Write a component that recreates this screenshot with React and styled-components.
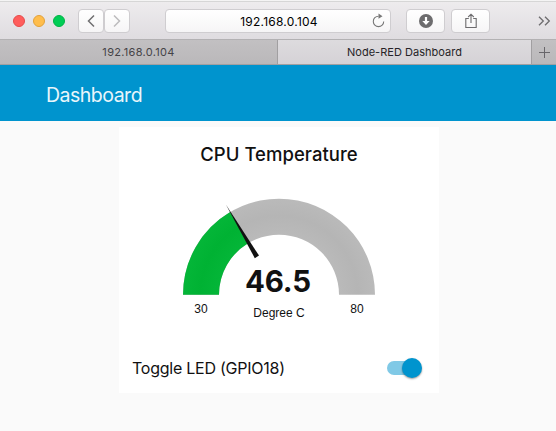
import React from 'react';
import styled, { createGlobalStyle } from 'styled-components';

const GlobalStyle = createGlobalStyle`
  * { box-sizing: border-box; }
  body { margin: 0; background: #fafafa; font-family: Inter, sans-serif; }
`;

const Window = styled.div`
  width: 556px;
  height: 431px;
  overflow: hidden;
  background: #fafafa;
`;

const Toolbar = styled.div`
  display: flex;
  align-items: center;
  height: 40px;
  padding: 2px 5px 0 13px;
  background: linear-gradient(#eeecee, #dfdce0);
  border-top: 1px solid #f4f4f4;
  border-bottom: 1px solid #b3b1b3;
  box-shadow: inset 0 1px #d6d6d6;
`;

const Lights = styled.div`
  display: flex;
  gap: 8px;
  width: 65px;
`;

const Light = styled.span`
  width: 12px;
  height: 12px;
  border-radius: 50%;
  background: ${(p) => p.$fill};
  border: 1px solid ${(p) => p.$edge};
`;

const ToolButton = styled.div`
  display: flex;
  align-items: center;
  justify-content: center;
  width: ${(p) => p.$width}px;
  height: 24px;
  margin-left: ${(p) => p.$gap || 0}px;
  border: 1px solid #cfcdd0;
  border-radius: 4px;
  background: linear-gradient(#ffffff, #f6f5f6);
`;

const Address = styled(ToolButton)`
  position: relative;
  font-size: 12px;
  letter-spacing: 0.24px;
  color: #000;
  span { transform: translateX(1px); }
  svg { position: absolute; right: 4px; top: 3px; }
`;

const More = styled.div`
  display: flex;
  margin-left: auto;
`;

const Tabs = styled.div`
  display: grid;
  grid-template-columns: 277px 1fr 25px;
  height: 25px;
  border-bottom: 1px solid #a19fa1;
`;

const Tab = styled.div`
  display: flex;
  align-items: center;
  justify-content: center;
  border-left: ${(p) => (p.$divided ? '1px solid #a19fa1' : '0')};
  background: ${(p) => (p.$active ? 'linear-gradient(#dddbde, #d5d2d6)' : 'linear-gradient(#c2c0c2, #bab8ba)')};
  color: ${(p) => (p.$active ? '#262427' : '#454347')};
  font-size: 11px;
  letter-spacing: ${(p) => p.$spacing || 0}px;
`;

const Header = styled.header`
  display: flex;
  align-items: center;
  height: 56px;
  padding: 3px 0 0 46px;
  background: #0094ce;
  color: #e9f6fb;
  font-size: 19.5px;
  letter-spacing: -0.5px;
`;

const Card = styled.main`
  width: 320px;
  height: 266px;
  margin: 6px 0 0 119px;
  background: #fff;
  color: #111;
`;

const Title = styled.h1`
  margin: 0;
  height: 53px;
  padding-top: 15px;
  text-align: center;
  font-size: 18.5px;
  line-height: 25px;
  font-weight: 500;
  letter-spacing: 0.04px;
`;

const Gauge = styled.svg`
  display: block;
  width: 320px;
  height: 163px;
  fill: #111;
`;

const ToggleRow = styled.div`
  display: flex;
  align-items: center;
  justify-content: space-between;
  height: 50px;
  padding: 0 17px 0 13px;
  font-size: 16px;
  letter-spacing: -0.25px;
`;

const Track = styled.div`
  display: flex;
  align-items: center;
  justify-content: flex-end;
  width: 32px;
  height: 14px;
  margin-right: 3px;
  border-radius: 7px;
  background: #80c9e6;
`;

const Knob = styled.div`
  flex: none;
  width: 20px;
  height: 20px;
  margin-right: -3px;
  border-radius: 50%;
  background: #0094ce;
  box-shadow: 0 1px 2px rgba(0, 0, 0, 0.4);
`;

const lights = [
  ['#ff5d5c', '#e64b4a'],
  ['#ffbd4c', '#e2a13a'],
  ['#00cd55', '#00b345'],
];

export default function App() {
  return (
    <Window>
      <GlobalStyle />
      <Toolbar>
        <Lights>
          {lights.map(([fill, edge]) => <Light key={fill} $fill={fill} $edge={edge} />)}
        </Lights>
        <ToolButton $width={26}>
          <svg width="10" height="14" viewBox="0 0 10 14" fill="none" stroke="#6f6e70" strokeWidth="1.5">
            <path d="M8 1.5 2.5 7 8 12.5" />
          </svg>
        </ToolButton>
        <ToolButton $width={26}>
          <svg width="10" height="14" viewBox="0 0 10 14" fill="none" stroke="#bcbbbd" strokeWidth="1.5">
            <path d="M2 1.5 7.5 7 2 12.5" />
          </svg>
        </ToolButton>
        <Address $width={226} $gap={35}>
          <span>192.168.0.104</span>
          <svg width="16" height="16" viewBox="0 0 16 16" fill="none" stroke="#777">
            <path d="M8.5 3.2A5.2 5.2 0 1 0 13.7 8.4" strokeWidth="1.1" />
            <path d="M8.5 .5 12.5 3.2 8.5 5.8Z" fill="#777" stroke="none" />
          </svg>
        </Address>
        <ToolButton $width={39} $gap={15}>
          <svg width="14" height="14" viewBox="0 0 14 14">
            <circle cx="7" cy="7" r="7" fill="#6d6c6e" />
            <path d="M5.9 3h2.2v4h2.6L7 11 3.3 7h2.6Z" fill="#fff" />
          </svg>
        </ToolButton>
        <ToolButton $width={39} $gap={6}>
          <svg width="12" height="17" viewBox="0 0 12 17" fill="none" stroke="#6d6c6e" strokeWidth="1.1">
            <path d="M3.8 5.5H.8v9h10.4v-9H8.2M6 10V1.2M3.2 4 6 1.2 8.8 4" />
          </svg>
        </ToolButton>
        <More>
          <svg width="13" height="10" viewBox="0 0 13 10" fill="none" stroke="#6d6c6e" strokeWidth="1.3">
            <path d="M1 .7 5.3 5 1 9.3M7 .7 11.3 5 7 9.3" />
          </svg>
        </More>
      </Toolbar>
      <Tabs>
        <Tab $spacing={0.3}>192.168.0.104</Tab>
        <Tab $active $divided $spacing={0.03}>Node-RED Dashboard</Tab>
        <Tab $divided>
          <svg width="11" height="11" viewBox="0 0 11 11" stroke="#68666a">
            <path d="M5.5 0v11M0 5.5h11" />
          </svg>
        </Tab>
      </Tabs>
      <Header>Dashboard</Header>
      <Card>
        <Title>CPU Temperature</Title>
        <Gauge viewBox="0 0 320 163">
          <defs>
            <radialGradient id="gray" gradientUnits="userSpaceOnUse" cx="160" cy="114.5" r="96">
              <stop offset=".62" stopColor="#bababa" />
              <stop offset=".82" stopColor="#b5b5b5" />
              <stop offset="1" stopColor="#bababa" />
            </radialGradient>
            <radialGradient id="green" gradientUnits="userSpaceOnUse" cx="160" cy="114.5" r="96">
              <stop offset=".62" stopColor="#04b638" />
              <stop offset=".82" stopColor="#00b233" />
              <stop offset="1" stopColor="#04b638" />
            </radialGradient>
          </defs>
          <path d="M64 114.7A96 96 0 0 1 256 114.7H220A60 60 0 0 0 100 114.7Z" fill="url(#gray)" />
          <path d="M64 114.7A96 96 0 0 1 111.1 32.1L129.5 63A60 60 0 0 0 100 114.7Z" fill="url(#green)" />
          <path d="M107 24.7 140 75.6 135.8 78.2Z" />
          <text x="159" y="112" textAnchor="middle" fontSize="29.5" fontWeight="700" textLength="66">46.5</text>
          <g fontFamily="Liberation Sans, sans-serif" fontSize="12" textAnchor="middle">
            <text x="82" y="133">30</text>
            <text x="238" y="133">80</text>
            <text x="160" y="137">Degree C</text>
          </g>
        </Gauge>
        <ToggleRow>
          Toggle LED (GPIO18)
          <Track><Knob /></Track>
        </ToggleRow>
      </Card>
    </Window>
  );
}
